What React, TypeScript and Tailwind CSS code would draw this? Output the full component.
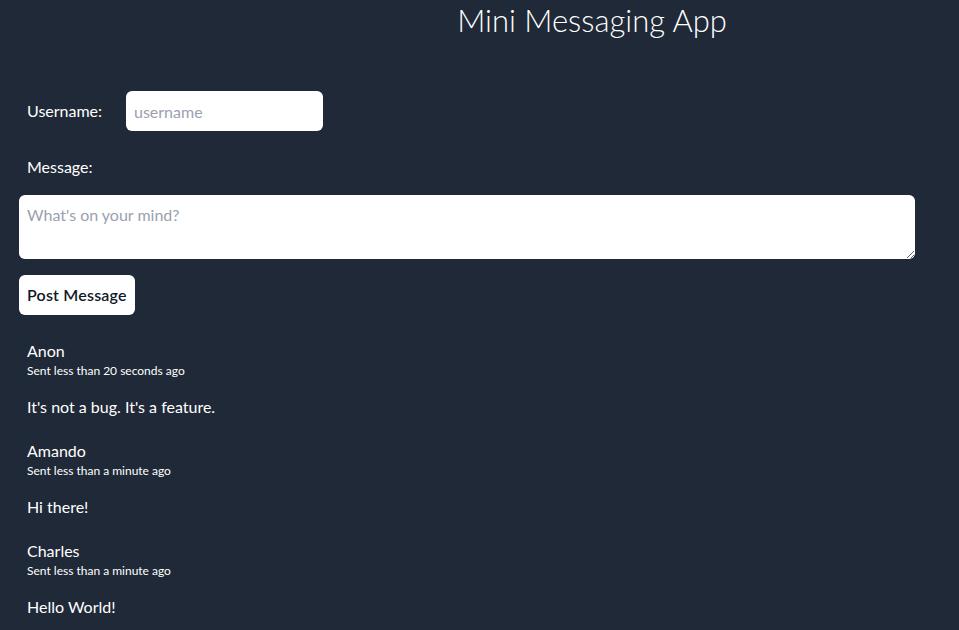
import React from "react";

const messages = [
  { user: "Anon", time: "Sent less than 20 seconds ago", text: "It's not a bug. It's a feature." },
  { user: "Amando", time: "Sent less than a minute ago", text: "Hi there!" },
  { user: "Charles", time: "Sent less than a minute ago", text: "Hello World!" },
];

export default function App() {
  return (
    <div
      className="min-h-screen w-full overflow-hidden bg-[#1f2937] text-white"
      style={{ fontFamily: "Lato, 'Noto Sans', sans-serif" }}
    >
      <div className="px-[19px] pt-[2px]">
        <h1 className="pl-[225px] text-center text-[31px] leading-[36px] font-light">Mini Messaging App</h1>
        <div className="mt-[53px] flex items-center">
          <label className="w-[107px] pl-2 text-base">Username:</label>
          <input
            className="h-10 w-[197px] rounded-md bg-white px-2 text-base text-black placeholder:text-gray-400 outline-none"
            placeholder="username"
          />
        </div>
        <div className="mt-6 pl-2 text-base leading-6">Message:</div>
        <textarea
          className="mt-4 block h-16 w-[896px] rounded-md bg-white px-2 py-2 text-base leading-6 text-black placeholder:text-gray-400 outline-none"
          placeholder="What's on your mind?"
        />
        <button className="mt-4 h-10 rounded-md bg-white px-2 text-base font-semibold tracking-[0.2px] text-[#111827]">
          Post Message
        </button>
        <div className="mt-6">
          {messages.map((m) => (
            <div key={m.user} className="mb-5 pl-2">
              <div className="text-base leading-6">{m.user}</div>
              <div className="text-xs leading-4">{m.time}</div>
              <div className="mt-4 text-base leading-6">{m.text}</div>
            </div>
          ))}
        </div>
      </div>
    </div>
  );
}
